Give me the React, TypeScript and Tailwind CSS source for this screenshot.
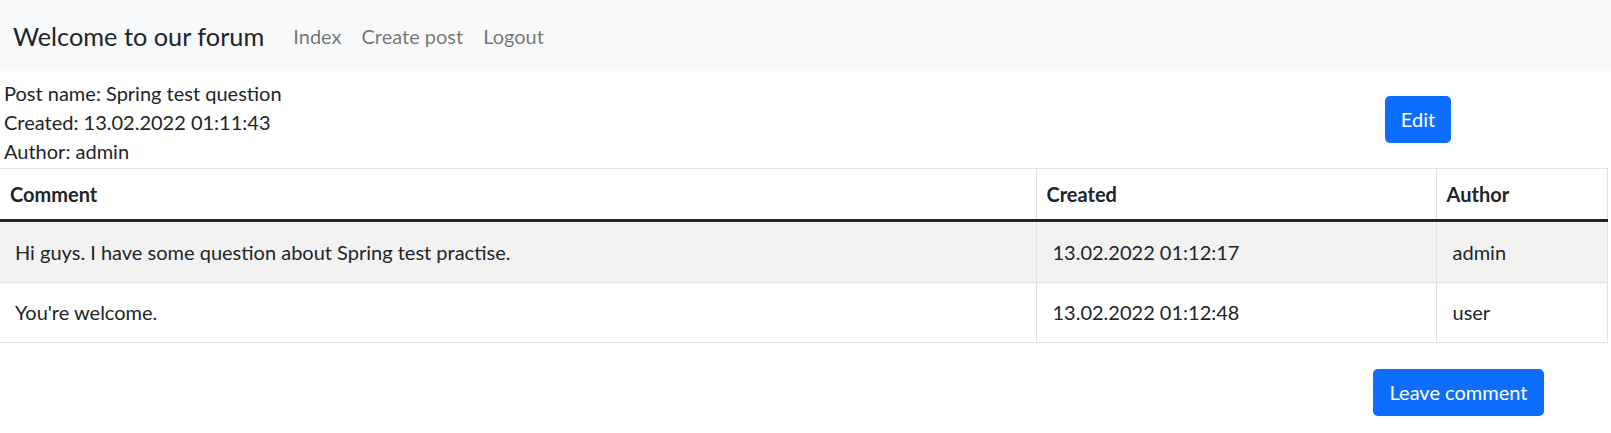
import React from "react";

const font = { fontFamily: "Lato, 'Noto Sans', sans-serif" };

const rows = [
  { comment: "Hi guys. I have some question about Spring test practise.", created: "13.02.2022 01:12:17", author: "admin" },
  { comment: "You're welcome.", created: "13.02.2022 01:12:48", author: "user" },
];

export default function App() {
  return (
    <div className="min-h-[433px] w-[1611px] bg-white text-[#212529] text-[20px] leading-[28.8px]" style={font}>
      <nav className="flex h-[71px] items-center bg-[#f8f9fa] pl-[13px] pt-[1px]">
        <span className="mr-[19px] text-[25.3px] leading-[36px] text-[#212529]">Welcome to our forum</span>
        <div className="flex items-center">
          <a className="px-[10px] text-[rgba(0,0,0,0.55)]">Index</a>
          <a className="px-[10px] text-[rgba(0,0,0,0.55)]">Create post</a>
          <a className="px-[10px] text-[rgba(0,0,0,0.55)]">Logout</a>
        </div>
      </nav>
      <div className="flex items-start justify-between pb-[3px] pl-[4px] pr-[160px] pt-[8px]">
        <div>
          <div>Post name: Spring test question</div>
          <div>Created: 13.02.2022 01:11:43</div>
          <div>Author: admin</div>
        </div>
        <button className="mt-[16.5px] h-[47px] w-[66px] rounded-[5px] bg-[#0d6efd] text-white">Edit</button>
      </div>
      <table className="w-[1608px] table-fixed border-collapse">
        <colgroup>
          <col className="w-[1036px]" />
          <col className="w-[400px]" />
          <col />
        </colgroup>
        <thead>
          <tr className="border-b-[3px] border-b-[#212529]">
            <th className="border-t border-[#dee2e6] px-[10px] pb-[10px] pt-[11px] text-left font-bold">Comment</th>
            <th className="border-x border-t border-[#dee2e6] px-[10px] pb-[10px] pt-[11px] text-left font-bold">Created</th>
            <th className="border-x border-t border-[#dee2e6] px-[10px] pb-[10px] pt-[11px] text-left font-bold">Author</th>
          </tr>
        </thead>
        <tbody>
          {rows.map((r, i) => (
            <tr key={i} className={i % 2 === 0 ? "bg-[#f2f2f2]" : "bg-white"}>
              <td className="border-b border-[#dee2e6] px-[15px] pb-[14.8px] pt-[15.8px]">{r.comment}</td>
              <td className="border-x border-b border-[#dee2e6] px-[16px] pb-[14.8px] pt-[15.8px]">{r.created}</td>
              <td className="border-x border-b border-[#dee2e6] px-[16px] pb-[14.8px] pt-[15.8px]">{r.author}</td>
            </tr>
          ))}
        </tbody>
      </table>
      <div className="flex justify-end pr-[67px] pt-[26px]">
        <button className="h-[47px] w-[171px] rounded-[5px] bg-[#0d6efd] text-white">Leave comment</button>
      </div>
    </div>
  );
}
